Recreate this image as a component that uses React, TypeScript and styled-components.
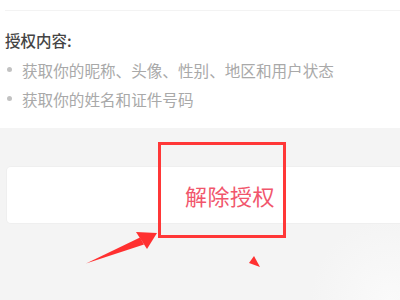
import styled, { createGlobalStyle } from "styled-components";

const GlobalStyle = createGlobalStyle`
  html, body {
    margin: 0;
    padding: 0;
    background: #f4f4f4;
    font-family: "Noto Sans CJK SC", "Noto Sans", sans-serif;
  }
`;

const Page = styled.div`
  position: relative;
  width: 400px;
  height: 300px;
  overflow: hidden;
  background: radial-gradient(circle at 390px 300px, #fafafa 0, #f4f4f4 80px);
`;

const InfoSection = styled.section`
  background: #fff;
  height: 128px;
  padding: 10px 0 0 5px;
  box-sizing: border-box;
`;

const InfoBody = styled.div`
  border-top: 1px solid #f3f3f3;
  padding-top: 19px;
`;

const Title = styled.h3`
  margin: 0 0 5px;
  font-size: 15.5px;
  line-height: 20px;
  font-weight: 500;
  color: #444;
`;

const List = styled.ul`
  margin: 0;
  padding: 0;
  list-style: none;
`;

const Item = styled.li`
  display: flex;
  align-items: center;
  gap: 10px;
  height: 29px;
  font-size: 15.6px;
  color: #a9a9a9;
  padding-left: 2px;

  &::before {
    content: "";
    width: 5px;
    height: 5px;
    border-radius: 50%;
    background: #c2c2c2;
    flex: none;
  }
`;

const ActionCard = styled.div`
  margin: 39px -60px 0 7px;
  height: 56px;
  background: #fff;
  border-radius: 4px;
  box-shadow: 0 0 0 1px #efefef;
  display: flex;
  align-items: center;
  padding-left: 178px;
`;

const ActionText = styled.span`
  font-size: 22px;
  color: #f1566c;
  letter-spacing: 0.5px;
`;

const Highlight = styled.div`
  position: absolute;
  left: 158px;
  top: 142px;
  width: 128px;
  height: 96px;
  box-sizing: border-box;
  border: 3px solid #ff3737;
`;

const Marks = styled.svg`
  position: absolute;
  left: 0;
  top: 0;
  pointer-events: none;
`;

export default function App() {
  return (
    <>
      <GlobalStyle />
      <Page>
        <InfoSection>
          <InfoBody>
            <Title>授权内容:</Title>
            <List>
              <Item>获取你的昵称、头像、性别、地区和用户状态</Item>
              <Item>获取你的姓名和证件号码</Item>
            </List>
          </InfoBody>
        </InfoSection>
        <ActionCard>
          <ActionText>解除授权</ActionText>
        </ActionCard>
        <Highlight />
        <Marks width="400" height="300" viewBox="0 0 400 300">
          <path d="M86 263.5 L140 237.5 L144 244.5 Z" fill="#ff3030" />
          <path d="M157 233 L136 232 L147 249 Z" fill="#ff3030" />
          <path d="M254 256 L249 263 L260 267 Z" fill="#ff3030" />
        </Marks>
      </Page>
    </>
  );
}
